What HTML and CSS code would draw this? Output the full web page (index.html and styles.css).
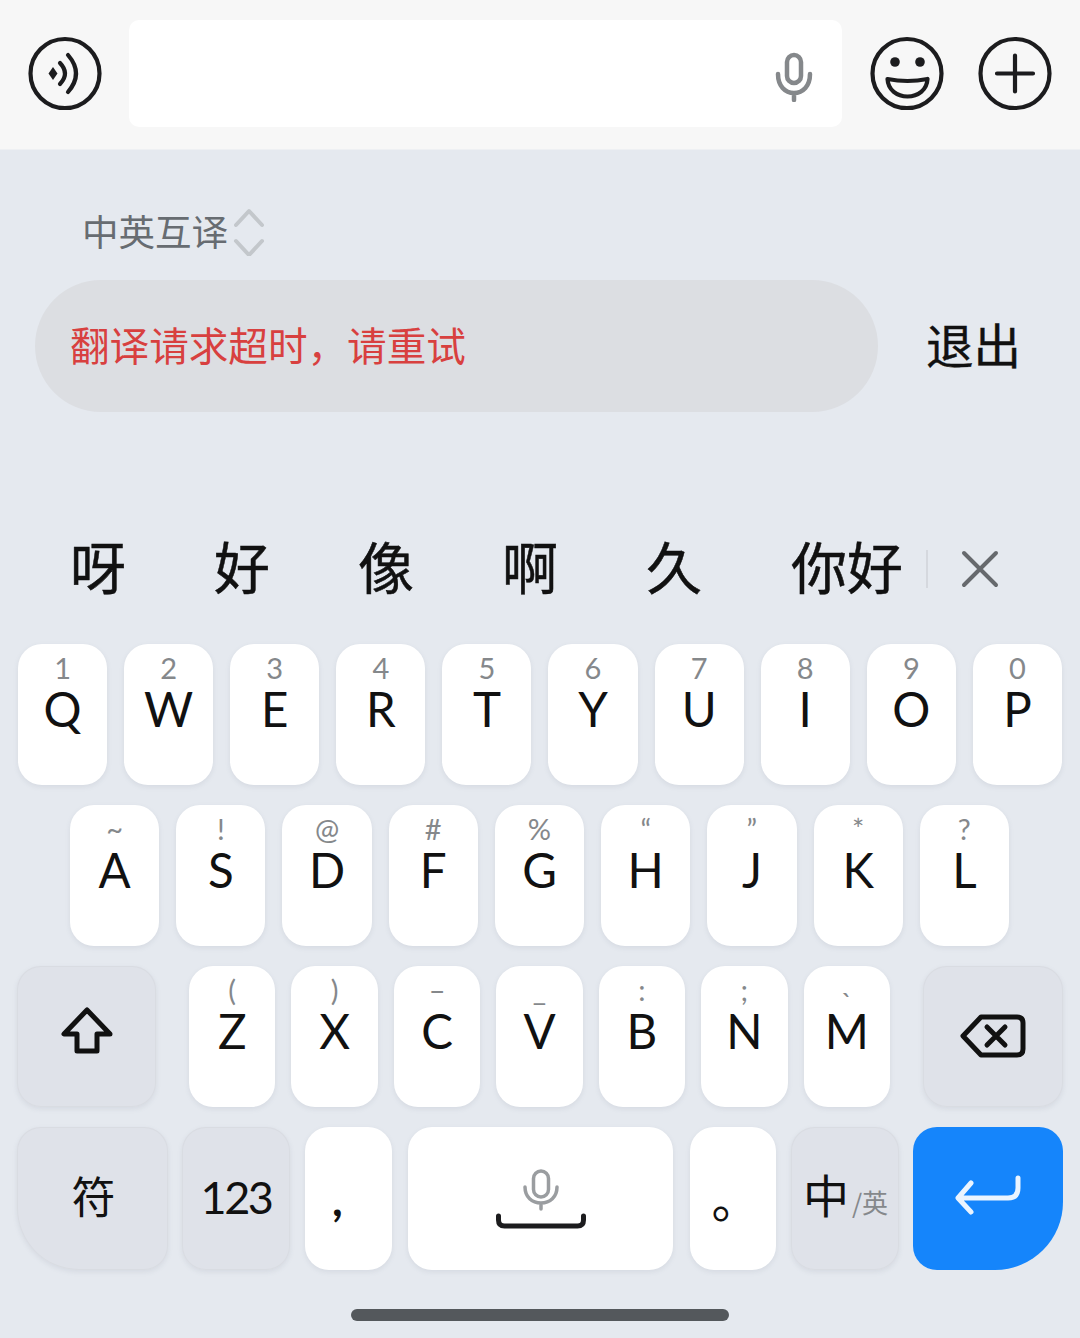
FILE: index.html
```html
<!DOCTYPE html>
<html lang="zh-CN">
<head>
<meta charset="utf-8">
<title>中英互译键盘</title>
<link rel="stylesheet" href="styles.css">
</head>
<body>
<div class="screen">
  <header class="chat-bar">
    <svg class="round-icon" viewBox="0 0 76 76"><circle cx="38" cy="37.500" r="34.500" class="ink"/><path d="M26 31 21.500 37.500 26 44 30.500 37.500z" class="solid"/><path d="M33 27Q43 37.500 33 48M41 19Q57 37.500 41 56" class="ink"/></svg>
    <div class="chat-input">
      <svg class="input-mic" viewBox="0 0 40 50"><rect x="13" y="3" width="14" height="28" rx="7" class="mic-line"/><path d="M4 22c0 12 7 19 16 19s16-7 16-19M20 41v7" class="mic-line"/></svg>
    </div>
    <svg class="round-icon emoji" viewBox="0 0 76 76"><circle cx="38" cy="37.500" r="34.500" class="ink"/><circle cx="26" cy="26" r="4.800" class="solid"/><circle cx="51" cy="26" r="4.800" class="solid"/><path d="M18.500 43Q38.500 47 58.500 43C58 54 49 60.500 38.500 60.500S19 54 18.500 43z" class="ink"/></svg>
    <svg class="round-icon plus" viewBox="0 0 76 76"><circle cx="38" cy="37.500" r="34.500" class="ink"/><path d="M20 37.500h36M38 19.500v36" class="ink"/></svg>
  </header>

  <main class="panel">
    <div class="mode">
      <span class="mode-label">中英互译</span>
      <svg class="mode-arrows" viewBox="0 0 32 48"><path d="M3 17 16 3l13 14M3 33l13 14 13-14"/></svg>
    </div>
    <div class="translate-row">
      <div class="translate-pill">翻译请求超时，请重试</div>
      <span class="exit">退出</span>
    </div>
    <div class="candidates">
      <span class="cand">呀</span>
      <span class="cand">好</span>
      <span class="cand">像</span>
      <span class="cand">啊</span>
      <span class="cand">久</span>
      <span class="cand">你好</span>
      <i class="cand-sep"></i>
      <svg class="cand-close" viewBox="0 0 38 38"><path d="M3 3l32 32M35 3 3 35"/></svg>
    </div>

    <div class="keyboard">
      <div class="row row-1">
        <div class="key"><span class="hint">1</span><span class="letter">Q</span></div>
        <div class="key"><span class="hint">2</span><span class="letter">W</span></div>
        <div class="key"><span class="hint">3</span><span class="letter">E</span></div>
        <div class="key"><span class="hint">4</span><span class="letter">R</span></div>
        <div class="key"><span class="hint">5</span><span class="letter">T</span></div>
        <div class="key"><span class="hint">6</span><span class="letter">Y</span></div>
        <div class="key"><span class="hint">7</span><span class="letter">U</span></div>
        <div class="key"><span class="hint">8</span><span class="letter">I</span></div>
        <div class="key"><span class="hint">9</span><span class="letter">O</span></div>
        <div class="key"><span class="hint">0</span><span class="letter">P</span></div>
      </div>
      <div class="row row-2">
        <div class="key"><span class="hint">~</span><span class="letter">A</span></div>
        <div class="key"><span class="hint">!</span><span class="letter">S</span></div>
        <div class="key"><span class="hint">@</span><span class="letter">D</span></div>
        <div class="key"><span class="hint">#</span><span class="letter">F</span></div>
        <div class="key"><span class="hint">%</span><span class="letter">G</span></div>
        <div class="key"><span class="hint">“</span><span class="letter">H</span></div>
        <div class="key"><span class="hint">”</span><span class="letter">J</span></div>
        <div class="key"><span class="hint">*</span><span class="letter">K</span></div>
        <div class="key"><span class="hint">?</span><span class="letter">L</span></div>
      </div>
      <div class="row row-3">
        <div class="key fn shift">
          <svg class="shift-icon" viewBox="0 0 54 48"><path d="M27 4 4 28h13v17h20V28h13z"/></svg>
        </div>
        <div class="key"><span class="hint">(</span><span class="letter">Z</span></div>
        <div class="key"><span class="hint">)</span><span class="letter">X</span></div>
        <div class="key"><span class="hint">–</span><span class="letter">C</span></div>
        <div class="key"><span class="hint">_</span><span class="letter">V</span></div>
        <div class="key"><span class="hint">:</span><span class="letter">B</span></div>
        <div class="key"><span class="hint">;</span><span class="letter">N</span></div>
        <div class="key"><span class="hint low">`</span><span class="letter">M</span></div>
        <div class="key fn backspace">
          <svg class="back-icon" viewBox="0 0 66 44"><path d="M3 22 21 3h36q6 0 6 6v26q0 6-6 6H21z"/><path d="M27 13l18 18M45 13 27 31"/></svg>
        </div>
      </div>
      <div class="row row-4">
        <div class="key fn symbol"><span class="fn-text">符</span></div>
        <div class="key fn digits"><span class="fn-text num">123</span></div>
        <div class="key comma"><span class="punct">,</span></div>
        <div class="key space">
          <svg class="space-icon" viewBox="0 0 92 62"><g class="space-mic"><rect x="38.500" y="4" width="15" height="26" rx="7.500"/><path d="M30 20c0 10 7 16 16 16s16-6 16-16M46 36v6"/></g><path class="space-bar" d="M3.500 49v4q0 6 6 6h73q6 0 6-6v-4"/></svg>
        </div>
        <div class="key period"><span class="ring">。</span></div>
        <div class="key fn lang"><span class="lang-main">中</span><span class="lang-sub">/英</span></div>
        <div class="key enter">
          <svg class="enter-icon" viewBox="0 0 68 40"><path d="M64 3v10q0 10-10 10H5M17 8 4 23l13 14"/></svg>
        </div>
      </div>
    </div>
    <div class="home-indicator"></div>
  </main>
</div>
</body>
</html>
```
FILE: styles.css
```css
* { box-sizing: border-box; }
html, body { margin: 0; padding: 0; }
body {
  width: 1080px;
  height: 1338px;
  overflow: hidden;
  background: #e5e9ef;
  font-family: "Noto Sans CJK SC", "Noto Sans", sans-serif;
}
.screen { width: 1080px; height: 1338px; display: flex; flex-direction: column; }

.chat-bar {
  height: 150px;
  flex: none;
  display: flex;
  align-items: center;
  background: #f7f7f7;
  border-bottom: 1px solid #eef0f3;
  padding: 0 27px 1px;
}
.round-icon { width: 76px; height: 76px; flex: none; }
.ink { fill: none; stroke: #1c1c1e; stroke-width: 4.200; stroke-linecap: round; stroke-linejoin: round; }
.solid { fill: #1c1c1e; }
.chat-input {
  width: 713px;
  height: 107px;
  margin: -1px 0 0 26px;
  background: #fff;
  border-radius: 10px;
  display: flex;
  align-items: center;
  justify-content: flex-end;
  padding-right: 28px;
  padding-top: 6px;
}
.input-mic { width: 40px; height: 50px; }
.mic-line { fill: none; stroke: #85888b; stroke-width: 4.500; stroke-linecap: round; }
.emoji { margin-left: 27px; }
.plus { margin-left: 32px; }

.panel { flex: 1; display: flex; flex-direction: column; }

.mode { display: flex; align-items: center; height: 50px; margin: 57px 0 0 82px; }
.mode-label { font-size: 36.500px; line-height: 48px; color: #676c71; margin-top: -2px; }
.mode-arrows { width: 32px; height: 48px; margin-left: 5px; }
.mode-arrows path { fill: none; stroke: #c3c7cb; stroke-width: 4; stroke-linecap: round; stroke-linejoin: round; }

.translate-row { display: flex; align-items: center; margin: 23px 0 0 35px; }
.translate-pill {
  width: 843px;
  height: 132px;
  border-radius: 66px;
  background: #dcdee2;
  color: #d8403f;
  font-size: 39.600px;
  line-height: 128px;
  padding-left: 35px;
}
.exit { font-size: 47.500px; -webkit-text-stroke: 0.4px #111; line-height: 56px; color: #111; margin: -4px 0 0 48px; }

.candidates { display: flex; align-items: center; height: 60px; margin: 127px 0 0 70px; }
.cand { width: 144px; font-size: 56px; -webkit-text-stroke: 0.5px #111; line-height: 52px; color: #111; flex: none; margin-top: -8px; }
.cand:nth-of-type(6) { width: 135px; margin-left: 1px; }
.cand-sep { width: 2px; height: 38px; background: #d5d8de; flex: none; }
.cand-close { width: 38px; height: 38px; margin-left: 33px; }
.cand-close path { fill: none; stroke: #66696d; stroke-width: 4; stroke-linecap: round; }

.keyboard { margin-top: 45px; display: flex; flex-direction: column; gap: 20px; }
.row { display: flex; height: 141px; }
.row-1 { padding: 0 18px; gap: 17px; }
.row-2 { padding: 0 71px 0 70px; gap: 17px; }
.row-3 { padding: 0 17px; gap: 16px; }
.row-4 { height: 143px; padding: 0 17px; gap: 15px; }

.key {
  flex: 1 1 0;
  min-width: 0;
  display: flex;
  flex-direction: column;
  align-items: center;
  background: #fff;
  border-radius: 24px;
  box-shadow: 0 2px 5px rgba(120, 130, 150, 0.14);
  color: #111;
  font-family: Lato, "Noto Sans", sans-serif;
}
.hint { height: 26px; margin-top: 11px; font-size: 29px; line-height: 26px; font-weight: 400; color: #85888b; }
.hint.low { line-height: 52px; }
.letter { height: 50px; margin-top: 3px; font-size: 47.500px; line-height: 50px; font-weight: 400; }

.fn {
  background: #dfe2e9;
  box-shadow: inset 0 0 0 1px #d9dce2, 0 2px 5px rgba(120, 130, 150, 0.14);
  justify-content: center;
}
.shift { flex: none; width: 139px; margin-right: 17px; }
.backspace { flex: none; width: 140px; margin-left: 17px; }
.shift-icon { width: 54px; height: 48px; margin-top: -14px; }
.shift-icon path { fill: none; stroke: #111; stroke-width: 5; stroke-linejoin: round; }
.back-icon { width: 66px; height: 44px; margin-top: -2px; }
.back-icon path { fill: none; stroke: #111; stroke-width: 5; stroke-linejoin: round; stroke-linecap: round; }

.symbol { flex: none; width: 151px; border-bottom-left-radius: 62px; padding-left: 2px; }
.digits { flex: none; width: 108px; margin-left: -1px; }
.comma { flex: none; width: 87px; }
.space { flex: none; width: 265px; justify-content: center; margin-left: 1px; }
.period { flex: none; width: 86px; margin-left: 2px; }
.lang { flex: none; width: 108px; flex-direction: row; align-items: baseline; justify-content: center; padding-top: 36px; padding-left: 1px; }
.enter { flex: none; width: 150px; margin-left: -1px; background: #1585fb; border-bottom-right-radius: 68px; justify-content: center; box-shadow: none; }

.fn-text { font-family: "Noto Sans CJK SC", sans-serif; font-size: 44px; line-height: 60px; margin-top: -8px; }
.num { font-family: Lato, sans-serif; font-size: 45px; letter-spacing: -2.500px; margin-top: -4px; }
.punct { font-size: 46px; line-height: 50px; margin: 47px 22px 0 0; font-weight: 700; }
.ring { font-family: "Noto Sans CJK SC", sans-serif; font-size: 48px; line-height: 50px; margin: 45px 0 0 5px; }
.space-icon { width: 92px; height: 62px; margin-top: -2px; }
.space-mic rect, .space-mic path { fill: none; stroke: #9a9da0; stroke-width: 3.500; stroke-linecap: round; }
.space-bar { fill: none; stroke: #1c1c1e; stroke-width: 5; stroke-linecap: round; }
.lang-main { font-family: "Noto Sans CJK SC", sans-serif; font-size: 46px; line-height: 60px; }
.lang-sub { font-family: "Noto Sans CJK SC", sans-serif; font-size: 26px; color: #85888b; margin-left: 3px; font-weight: 400; }
.enter-icon { width: 68px; height: 40px; margin-top: -8px; }
.enter-icon path { fill: none; stroke: #eaf4ff; stroke-width: 5; stroke-linecap: round; stroke-linejoin: round; }

.home-indicator { width: 378px; height: 12px; border-radius: 6px; background: #54585c; margin: 39px auto 0; }
```
